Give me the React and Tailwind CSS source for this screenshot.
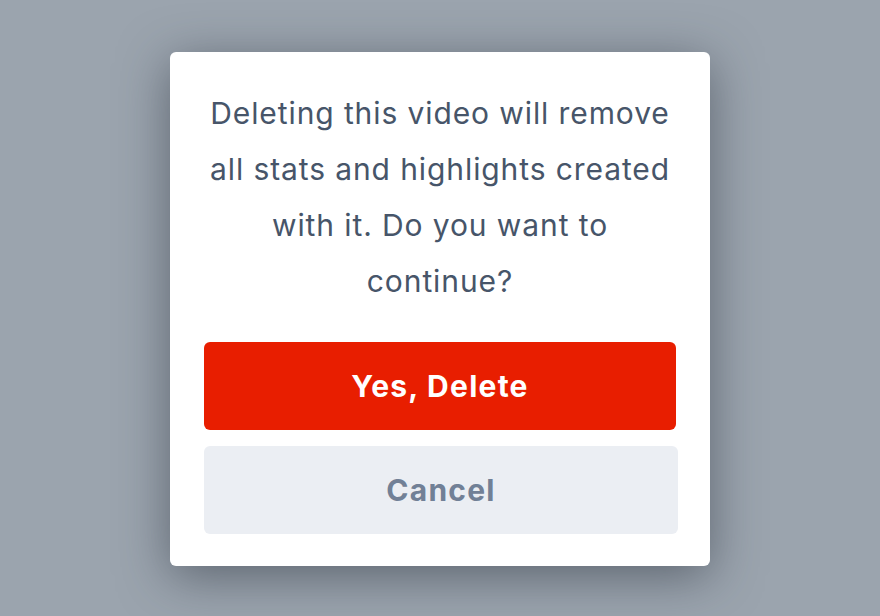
export default function App() {
  return (
    <div
      className="w-[880px] h-[616px] bg-[#9ba4ae] flex justify-center pt-[52px]"
      style={{ fontFamily: 'Inter, "Noto Sans", sans-serif' }}
    >
      <div className="w-[540px] h-[514px] bg-white rounded-[6px] shadow-[0_10px_50px_rgba(40,48,58,0.55)] pt-[33px] pl-[34px] pr-[32px] flex flex-col">
        <p className="text-[30px] leading-[56px] tracking-[0.03em] text-[#475569] text-center w-[472px]">
          Deleting this video will remove all stats and highlights created with it. Do you want to continue?
        </p>
        <button className="mt-[33px] w-[472px] h-[88px] rounded-[6px] bg-[#e81e00] text-white text-[30px] font-bold tracking-[0.042em]">
          Yes, Delete
        </button>
        <button className="mt-[16px] w-[474px] h-[88px] rounded-[6px] bg-[#ebeef3] text-[#718096] text-[30px] font-bold tracking-[0.042em]">
          Cancel
        </button>
      </div>
    </div>
  );
}
